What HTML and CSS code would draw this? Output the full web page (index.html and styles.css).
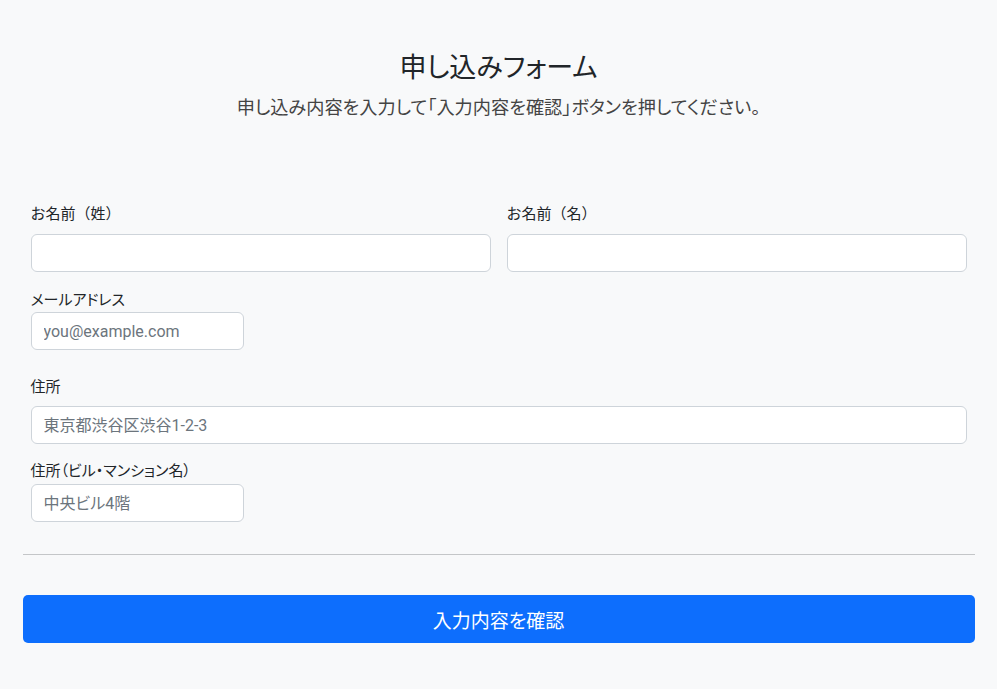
FILE: index.html
```html
<!DOCTYPE html>
<html lang="ja">
<head>
    <meta charset="UTF-8">
    <meta name="viewport" content="width=device-width, initial-scale=1.0">
    <title>申し込みフォーム</title>
    <link rel="stylesheet" href="styles.css">
</head>
<body>
    <div class="container">
        <div class="page-header">
            <h1>申し込みフォーム</h1>
            <p class="lead">申し込み内容を入力して「入力内容を確認」ボタンを押してください。</p>
        </div>

        <form id="applyForm">
            <div class="form-row">
                <div class="form-group">
                    <label for="lastName" class="label-wide">お名前（姓）</label>
                    <input type="text" id="lastName" name="lastName">
                </div>
                <div class="form-group">
                    <label for="firstName" class="label-wide">お名前（名）</label>
                    <input type="text" id="firstName" name="firstName">
                </div>
            </div>

            <div class="form-group group-email">
                <label for="email" class="label-tight">メールアドレス</label>
                <input type="email" id="email" name="email" class="input-short" placeholder="you@example.com">
            </div>

            <div class="form-group group-address">
                <label for="address">住所</label>
                <input type="text" id="address" name="address" placeholder="東京都渋谷区渋谷1-2-3">
            </div>

            <div class="form-group group-building">
                <label for="building" class="label-tight">住所（ビル・マンション名）</label>
                <input type="text" id="building" name="building" class="input-short" placeholder="中央ビル4階">
            </div>

            <hr class="divider">

            <button type="submit" class="btn">入力内容を確認</button>
        </form>
    </div>
</body>
</html>
```

FILE: styles.css
```css
body {
    font-family: "Roboto", "Noto Sans CJK JP", sans-serif;
    font-feature-settings: "palt";
    margin: 0;
    background: #f8f9fa;
    color: #212529;
}
.container {
    width: 952px;
    margin: 0 auto;
    padding-top: 51px;
}
.page-header {
    text-align: center;
}
h1 {
    font-size: 27px;
    font-weight: 400;
    line-height: 34px;
    margin: 0;
}
.lead {
    font-size: 18.2px;
    line-height: 26px;
    color: #444;
    margin: 10px 0 0;
}
form {
    margin-top: 81px;
    padding: 0 8px;
}
.form-row {
    display: flex;
    gap: 16px;
}
.form-row .form-group {
    flex: 1;
}
.form-group {
    margin-bottom: 16px;
}
.group-email {
    margin-bottom: 25px;
}
.group-address {
    margin-bottom: 15px;
}
label {
    display: block;
    font-size: 15px;
    line-height: 24px;
    margin-bottom: 8px;
}
.label-wide {
    font-feature-settings: normal;
}
.group-address label {
    margin-bottom: 7px;
}
.label-tight {
    margin-bottom: 0;
}
.group-building .label-tight {
    margin-bottom: 1px;
}
input {
    display: block;
    width: 100%;
    height: 38px;
    padding: 6px 12px;
    border: 1px solid #ced4da;
    border-radius: 6px;
    background: #fff;
    font-family: inherit;
    font-feature-settings: "palt";
    font-size: 16px;
    color: #212529;
    box-sizing: border-box;
}
input::placeholder {
    color: #6c757d;
}
input:focus {
    outline: none;
    border-color: #86b7fe;
    box-shadow: 0 0 0 4px rgba(13, 110, 253, 0.25);
}
.input-short {
    width: 213px;
}
.divider {
    margin: 32px -8px 40px;
    border: 0;
    border-top: 1px solid #c4c6c8;
}
.btn {
    display: block;
    width: calc(100% + 16px);
    margin: 0 -8px;
    height: 48px;
    background: #0d6efd;
    color: #fff;
    border: none;
    border-radius: 5px;
    font-family: inherit;
    font-feature-settings: "palt";
    font-size: 19px;
    cursor: pointer;
}
.btn:hover {
    background: #0b5ed7;
}
```
